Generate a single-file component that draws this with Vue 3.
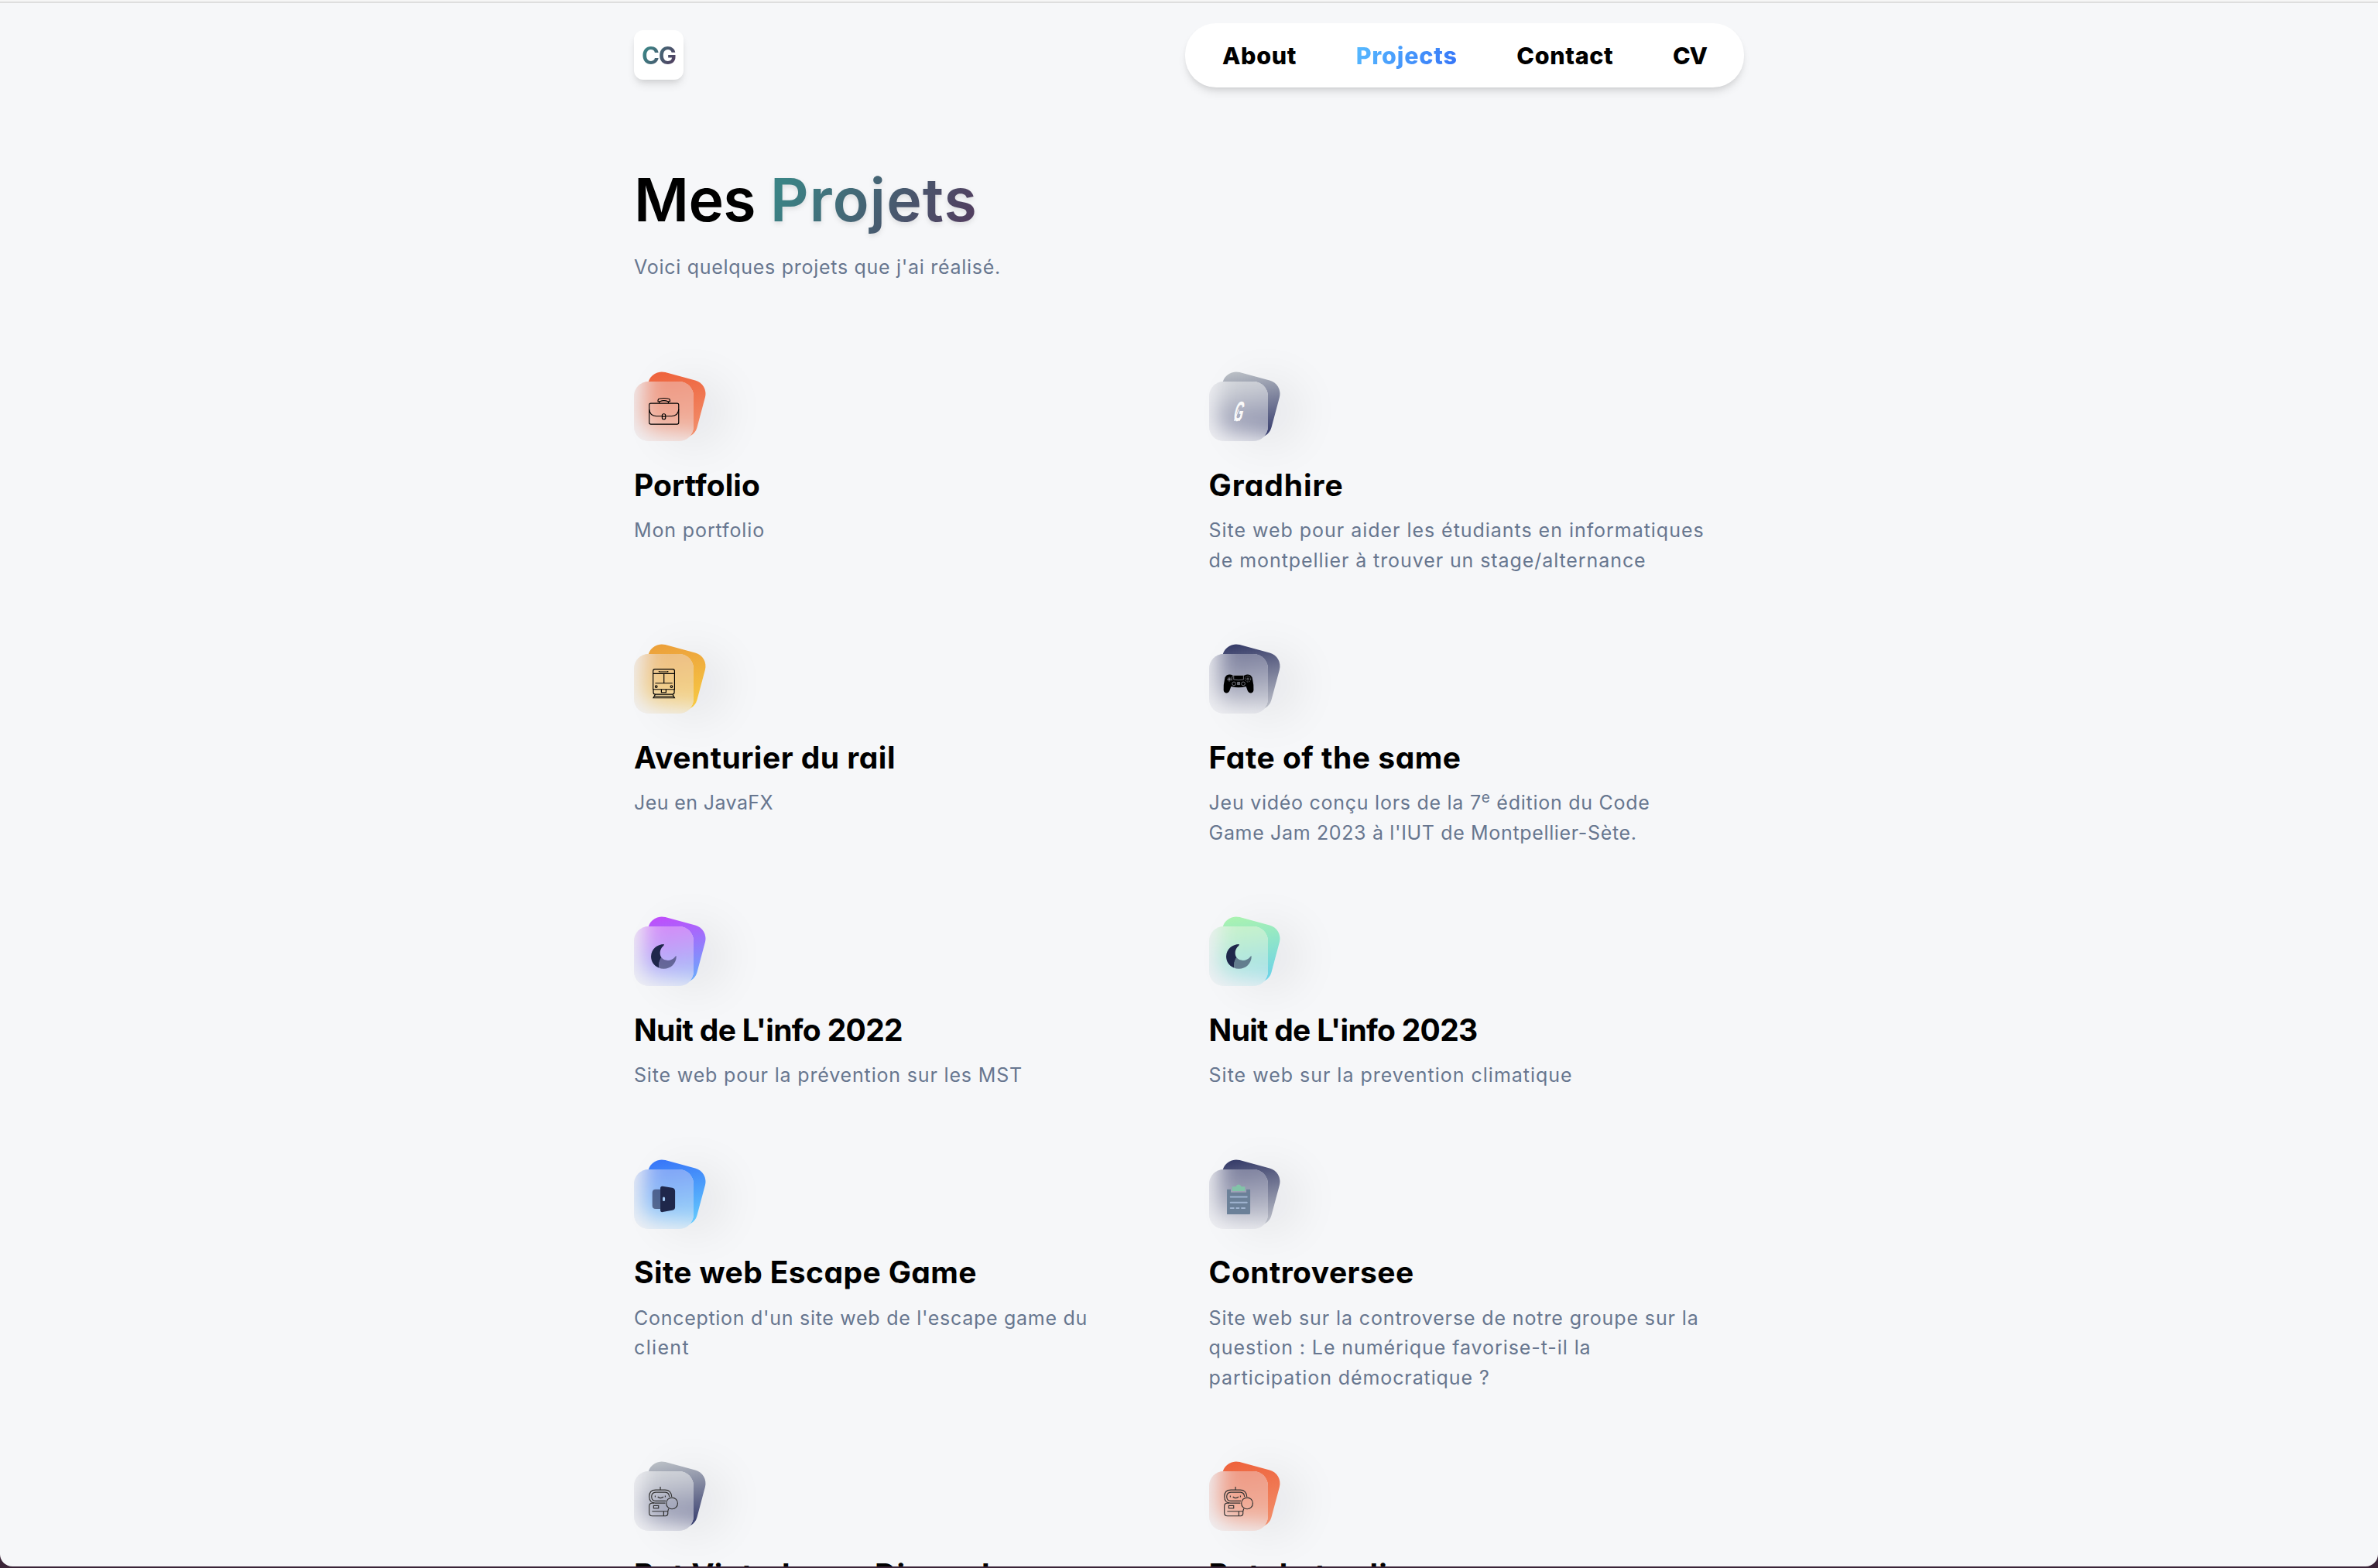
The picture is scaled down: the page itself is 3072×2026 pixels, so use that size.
<script setup>
// Spreads the letters of a line so that it takes the given measure.
const vFit = {
  mounted(el, { value }) {
    const natural = el.getBoundingClientRect().width
    const count = [...el.textContent].length
    el.style.letterSpacing = `${(value - natural) / count}px`
  },
}

const links = [
  { label: 'About', width: 96 },
  { label: 'Projects', width: 131, active: true },
  { label: 'Contact', width: 125 },
  { label: 'CV', width: 44 },
]

const projects = [
  { title: 'Portfolio', width: 163, tone: 'orange', icon: 'briefcase', lines: [['Mon portfolio', 169]] },
  {
    title: 'Gradhire', width: 174, tone: 'slate', icon: 'gradhire',
    lines: [['Site web pour aider les étudiants en informatiques', 640], ['de montpellier à trouver un stage/alternance', 565]],
  },
  { title: 'Aventurier du rail', width: 338, tone: 'yellow', icon: 'train', lines: [['Jeu en JavaFX', 180]] },
  {
    title: 'Fate of the same', width: 326, tone: 'navy', icon: 'gamepad',
    lines: [['Jeu vidéo conçu lors de la 7<sup>e</sup> édition du Code', 570], ["Game Jam 2023 à l'IUT de Montpellier-Sète.", 553]],
  },
  { title: "Nuit de L'info 2022", width: 347, tone: 'purple', icon: 'moon', lines: [['Site web pour la prévention sur les MST', 502]] },
  { title: "Nuit de L'info 2023", width: 347, tone: 'mint', icon: 'moon', lines: [['Site web sur la prevention climatique', 470]] },
  {
    title: 'Site web Escape Game', width: 443, tone: 'blue', icon: 'door',
    lines: [["Conception d'un site web de l'escape game du", 586], ['client', 72]],
  },
  {
    title: 'Controversee', width: 265, tone: 'navy', icon: 'clipboard',
    lines: [
      ['Site web sur la controverse de notre groupe sur la', 633],
      ['question : Le numérique favorise-t-il la', 494],
      ['participation démocratique ?', 363],
    ],
  },
  { title: 'Bot Vinted pour Discord', width: 460, tone: 'slate', icon: 'robot', lines: [] },
  { title: 'Bot de trading', width: 282, tone: 'orange', icon: 'robot', lines: [] },
]
</script>

<template>
  <div class="window">
    <div class="page">
      <div class="topline"></div>
      <header class="header">
        <a class="logo"><span v-fit="44" class="logo-text">CG</span></a>
        <nav class="nav">
          <a v-for="l in links" :key="l.label" v-fit="l.width" class="link" :class="{ active: l.active }">{{ l.label }}</a>
        </nav>
      </header>

      <main class="main">
        <h1 class="heading"><span v-fit="157" class="word">Mes</span><span class="space"></span><span v-fit="268" class="word accent">Projets</span></h1>
        <p class="lead"><span v-fit="474" class="line">Voici quelques projets que j'ai réalisé.</span></p>

        <section class="grid">
          <article v-for="p in projects" :key="p.title" class="card">
            <div class="badge" :class="p.tone">
              <div class="glass">
                <svg v-if="p.icon === 'briefcase'" viewBox="0 0 230 230" class="stroke">
                  <rect x="59" y="84" width="114" height="81" rx="6" />
                  <path d="M59 108q2 25 28 26h21M123 134h22q26-1 28-26" />
                  <path d="M93 77v-5q0-5 7-6q16-3 32 0q7 1 7 6v5h-7q-16-6-32 0zM98 77v7M133 77v7" />
                  <rect x="109" y="125" width="13" height="21" rx="6" />
                  <path d="M109 135h13" />
                </svg>
                <svg v-else-if="p.icon === 'gradhire'" viewBox="0 0 230 230">
                  <text class="mark" transform="translate(90 153) skewX(-14) scale(.42 1)">G</text>
                  <path d="M97 152l18-44M118 152l6-30" stroke="#fafafa" stroke-width="3" />
                </svg>
                <svg v-else-if="p.icon === 'train'" viewBox="0 0 230 230" class="stroke">
                  <path d="M74 137V66q0-7 7-7h69q7 0 7 7v71zM74 76h83M97 69h34v-3M97 66v3M116 76v37M82 113h67" />
                  <path d="M75 137v11q0 8 8 8h65q8 0 8-8v-11M106 137v12h18v-12M82 157l-7 13h82l-7-13M79 164h74" />
                  <circle cx="86" cy="126" r="4" /><circle cx="145" cy="126" r="4" />
                </svg>
                <svg v-else-if="p.icon === 'gamepad'" viewBox="0 0 230 230">
                  <path d="M68 82q12-6 24 1h44q12-7 24-1q6 4 8 16q5 20 4 42q-1 10-10 11q-9 0-13-9l-6-16q-29 7-58 0l-6 16q-4 9-13 9q-9-1-10-11q-1-22 4-42q2-12 8-16z" />
                  <g fill="none" stroke="#a5a6b3" stroke-width="2">
                    <path d="M95 82h38v17q-19 4-38 0zM78 89v18M69 98h18M73 92l10 11M83 92l-10 11" />
                    <circle cx="150" cy="97" r="11" stroke-dasharray="5 3" /><circle cx="150" cy="97" r="4" />
                    <circle cx="96" cy="115" r="7" /><circle cx="132" cy="115" r="7" /><circle cx="114" cy="114" r="5" />
                    <path d="M109 108l10 11M119 108l-10 11M92 83q-6 8-4 20" />
                  </g>
                </svg>
                <svg v-else-if="p.icon === 'moon'" viewBox="0 0 230 230" fill="#1f274b">
                  <path d="M116 69Q118 72 113 76C99 88 98 107 106 120C98 132 95 145 96 160C76 152 66 135 66 116C67 88 90 69 116 69z" />
                  <path opacity=".55" d="M106 120C118 136 146 135 158 119Q161 113 164 115C164 143 142 164 115 164Q104 164 96 160C95 145 98 132 106 120z" />
                </svg>
                <svg v-else-if="p.icon === 'door'" viewBox="0 0 230 230" fill="#1f274b">
                  <path opacity=".6" d="M102 77H84q-13 0-13 13v50q0 13 13 13h18z" />
                  <path d="M111 65l37 6q11 2 11 13v61q0 11-11 13l-37 7q-9 1-9-8V73q0-9 9-8z" />
                  <rect x="111" y="106" width="9" height="17" rx="4.500" fill="#a5cdf8" />
                </svg>
                <svg v-else-if="p.icon === 'clipboard'" viewBox="0 0 230 230">
                  <path fill="#6b8098" d="M69 77h15v12h60V77h15v93q0 4-4 4H69z" />
                  <path fill="#82c3a8" d="M89 67h13q4-2 5-6q7-5 14 0q1 4 5 6h13v17H89z" />
                  <path d="M83 106h63M83 128h63M83 150h12M106 150h9M126 150h12" fill="none" stroke="#a0b4d0" stroke-width="6" stroke-linecap="round" />
                </svg>
                <svg v-else viewBox="0 0 230 230" class="stroke grey">
                  <path d="M102 60v12M146 99Q144 72 120 72H84Q59 72 59 98Q60 123 82 123H121M123 115H84Q68 114 68 98T84 81H121Q136 82 137 99" />
                  <circle cx="147" cy="124" r="22" />
                  <path d="M82 94v6M121 94v6M92 99q10 9 22 0M78 123H70Q59 124 59 135V161Q59 173 71 173H122Q131 172 131 163V155H70M115 155v18M131 155l3-10" />
                  <rect x="76" y="133" width="19" height="10" />
                </svg>
              </div>
            </div>
            <h2 class="title"><span v-fit="p.width" class="line">{{ p.title }}</span></h2>
            <p class="desc">
              <span v-for="[text, width] in p.lines" :key="text" class="row"><span v-fit="width" class="line" v-html="text"></span></span>
            </p>
          </article>
        </section>
      </main>
    </div>
  </div>
</template>

<style>
html,
body {
  overflow: hidden;
}
</style>

<style scoped>
.window {
  height: 2026px;
  background: #3b2538;
  font-family: Inter, 'Noto Sans', sans-serif;
  color: #000;
}
.page {
  height: 2024px;
  overflow: hidden;
  border-radius: 0 0 16px 16px;
  background: #f6f7f9;
}
.topline {
  height: 2px;
  background: #f6f6f6;
  border-bottom: 2px solid #dedede;
}
.header,
.main {
  width: 1434px;
  margin: 0 auto;
}
.header {
  display: flex;
  justify-content: space-between;
  align-items: center;
  margin-top: 26px;
  height: 83px;
}
.logo {
  display: flex;
  align-items: center;
  justify-content: center;
  box-sizing: border-box;
  width: 64px;
  height: 64px;
  margin-bottom: 1px;
  border-radius: 12px;
  background: #fff;
  box-shadow: 0 8px 12px -2px rgba(0, 0, 0, 0.1), 0 4px 8px -4px rgba(0, 0, 0, 0.12);
}
.logo-text {
  font-size: 31px;
  font-weight: 750;
  background: linear-gradient(120deg, #3b8385 15%, #513f60 90%);
  background-clip: text;
  color: transparent;
}
.nav {
  display: flex;
  align-items: center;
  justify-content: space-between;
  box-sizing: border-box;
  width: 722px;
  height: 83px;
  padding: 0 48px 1px 48px;
  border-radius: 40px;
  background: #fff;
  box-shadow: 0 8px 12px -2px rgba(0, 0, 0, 0.1), 0 4px 8px -4px rgba(0, 0, 0, 0.12);
}
.link {
  font-size: 30.500px;
  font-weight: 800;
  white-space: nowrap;
}
.active {
  background: linear-gradient(120deg, #58bcff, #3473f8);
  background-clip: text;
  color: transparent;
}
.heading {
  display: flex;
  margin: 97px 0 0;
  height: 96px;
  font-size: 77px;
  line-height: 96px;
  font-weight: 640;
}
.word {
  white-space: nowrap;
}
.space {
  width: 19px;
}
.accent {
  background: linear-gradient(120deg, #3b8385 10%, #513f60 92%);
  background-clip: text;
  color: transparent;
  filter: drop-shadow(0 3px 3px rgba(0, 0, 0, 0.1));
}
.lead {
  margin: 19.500px 0 0;
}
.lead,
.desc {
  font-size: 25px;
  line-height: 38.400px;
  color: #67768f;
}
.line {
  display: inline-block;
  white-space: nowrap;
}
.grid {
  display: grid;
  grid-template-columns: 1fr 1fr;
  gap: 101.700px 51.200px;
  margin-top: 129.500px;
}
.badge {
  position: relative;
  width: 76.800px;
  height: 76.800px;
  margin-bottom: 28.800px;
}
.badge::before {
  content: '';
  position: absolute;
  left: 11.800px;
  top: -8.300px;
  width: 76px;
  height: 76px;
  border-radius: 18px;
  transform: rotate(15deg);
  background: linear-gradient(155deg, var(--from), var(--to));
  box-shadow: 28px 2px 60px rgba(20, 20, 25, 0.075);
}
.glass {
  position: absolute;
  inset: 0;
  overflow: hidden;
  border-radius: 19px;
  background: #eff0f2;
}
/* soft tint that runs past the top and right edges of the pane */
.glass::before {
  content: '';
  position: absolute;
  left: 13px;
  top: -48px;
  width: 120px;
  height: 118px;
  border-radius: 20px;
  transform: rotate(6deg);
  background: linear-gradient(165deg, var(--from) 38%, var(--to) 96%);
  filter: blur(14px);
}
.glass::after {
  content: '';
  position: absolute;
  inset: 0;
  background: rgba(240, 241, 244, 0.4);
}
.glass svg {
  position: relative;
  z-index: 1;
  display: block;
  width: 100%;
  height: 100%;
}
.stroke {
  fill: none;
  stroke: #000;
  stroke-width: 3.500;
}
.grey {
  stroke: #333;
}
.mark {
  font: 700 108px 'Liberation Sans', sans-serif;
  fill: #fafafa;
}
.orange { --from: #ee6039; --to: #f29370; }
.slate { --from: #c3c8cb; --to: #2b3166; }
.yellow { --from: #eb9d3a; --to: #f8cd45; }
.navy { --from: #2d3362; --to: #c5c8cf; }
.purple { --from: #c547fb; --to: #63b2fc; }
.mint { --from: #aff5ad; --to: #65cfee; }
.blue { --from: #3570f8; --to: #68d2fe; }
.title {
  margin: 0 0 11.400px;
  font-size: 39px;
  line-height: 56px;
  font-weight: 650;
  height: 56px;
  font-feature-settings: 'cv11';
}
.desc {
  margin: 0 0 0.500px;
}
.row {
  display: block;
  height: 38.400px;
}
.row :deep(sup) {
  font-size: 19px;
  line-height: 0;
  vertical-align: baseline;
  position: relative;
  top: -9px;
}
</style>
